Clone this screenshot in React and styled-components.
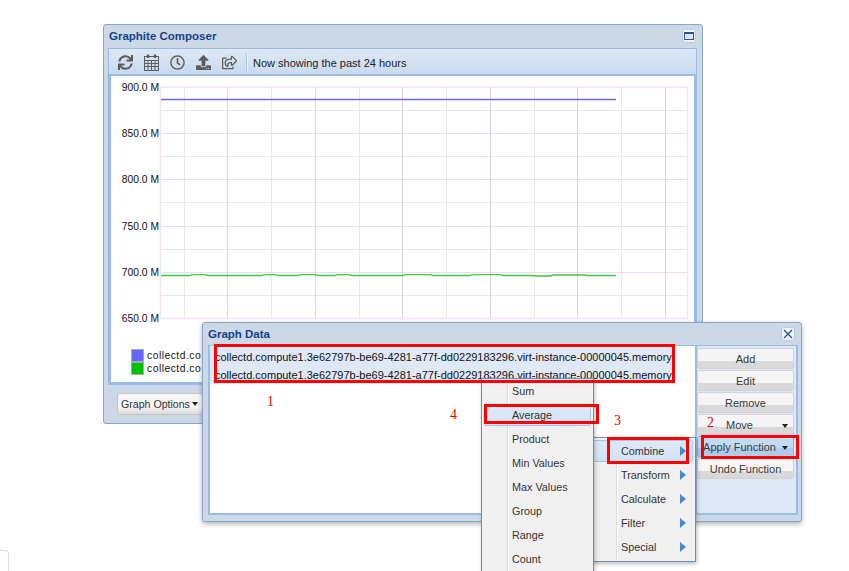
import styled, { createGlobalStyle } from "styled-components";
import { FaSync, FaRegClock, FaUpload, FaRegShareSquare } from "react-icons/fa";

const GlobalStyle = createGlobalStyle`
  html, body {
    margin: 0;
    padding: 0;
    background: #fff;
    font-family: "Liberation Sans", Arial, sans-serif;
  }
`;

const TARGET = "collectd.compute1.3e62797b-be69-4281-a77f-dd0229183296.virt-instance-00000045.memory-";
const buttons = ["Add", "Edit", "Remove", "Move", "Apply Function", "Undo Function"];
const firstMenu = ["Sum", "Average", "Product", "Min Values", "Max Values", "Group", "Range", "Count"];
const subMenu = ["Combine", "Transform", "Calculate", "Filter", "Special"];
const yLabels = [
  ["900.0 M", 87],
  ["850.0 M", 133],
  ["800.0 M", 179],
  ["750.0 M", 226],
  ["700.0 M", 272],
  ["650.0 M", 318],
];
const minorY = [110, 156, 202, 249, 295];
const majorX = [227, 315, 402, 490, 577, 665];
const minorX = [184, 271, 359, 446, 534, 621];
const greenLine =
  "161,275.5 190,275.5 193,274.6 205,274.6 208,275.5 262,275.5 265,274.6 275,274.6 278,275.5 298,275.5 301,274.6 315,274.6 318,275.5 335,275.5 " +
  "338,274.6 349,274.6 352,275.5 403,275.5 406,274.6 430,274.6 433,275.5 470,275.5 473,274.6 500,274.6 503,275.5 533,275.5 536,276 550,276 553,275 585,275 588,275.5 616,275.5";

const Desktop = styled.div`
  position: relative;
  width: 849px;
  height: 571px;
  overflow: hidden;
  background: #fff;
`;

const PageCorner = styled.div`
  position: absolute;
  left: -10px;
  top: 550px;
  width: 17px;
  height: 40px;
  border: 1px solid #ddd;
  border-radius: 4px;
`;

const Window = styled.section`
  position: absolute;
  left: ${(p) => p.$left}px;
  top: ${(p) => p.$top}px;
  width: 600px;
  height: ${(p) => p.$height}px;
  box-sizing: border-box;
  display: flex;
  flex-direction: column;
  background: #cbd8e7;
  border: 1px solid #8ba5c7;
  border-radius: 3px;
  box-shadow: ${(p) => (p.$shadow ? "0 2px 5px rgba(0, 0, 0, 0.3)" : "none")};
`;

const TitleBar = styled.header`
  height: ${(p) => p.$height}px;
  flex: none;
  box-sizing: border-box;
  display: flex;
  align-items: center;
  justify-content: space-between;
  padding: 0 6px ${(p) => p.$lift || 0}px 5px;
  color: #15428b;
  font-size: 11.5px;
  font-weight: bold;
`;

const WinButton = styled.div`
  width: 14px;
  height: 14px;
  box-sizing: border-box;
  display: flex;
  align-items: center;
  justify-content: center;
  background: #f0f5fc;
  border: 1px solid #b7cbe4;
  border-radius: 3px;
`;

const Toolbar = styled.div`
  height: 28px;
  flex: none;
  margin: 0 5px 0 4px;
  box-sizing: border-box;
  display: flex;
  align-items: center;
  padding: 1px 0 0 9px;
  border: 1px solid #99bbe8;
  border-bottom-width: 2px;
  background: linear-gradient(#dde9f6, #c9daef);
`;

const ToolIcon = styled.span`
  width: 26px;
  flex: none;
  display: flex;
  color: #5c5c5c;
  font-size: 15px;
`;

const ToolSep = styled.span`
  width: 1px;
  height: 17px;
  margin: 0 6px 0 -2px;
  background: #a9c2e0;
  box-shadow: 1px 0 0 #eef4fb;
`;

const ToolText = styled.span`
  margin-top: 1px;
  font-size: 11px;
  color: #222;
`;

const ChartPanel = styled.div`
  height: 309px;
  flex: none;
  margin: 0 5px 0 4px;
  box-sizing: border-box;
  background: #fff;
  border: 3px solid #99bbe8;
  border-top: 0;
  overflow: hidden;
`;

const Footer = styled.div`
  padding: 8px 0 0 13px;
`;

const OptionsButton = styled.div`
  width: 86px;
  height: 22px;
  box-sizing: border-box;
  display: flex;
  align-items: center;
  padding-left: 3px;
  gap: 2px;
  border: 1px solid #c4c4c4;
  border-radius: 3px;
  background: linear-gradient(#f6f6f6 60%, #dcdcdc);
  font-size: 10.6px;
  color: #333;
`;

const Caret = styled.i`
  display: block;
  width: 0;
  height: 0;
  border: 3px solid transparent;
  border-top: 4px solid #222;
  border-bottom: 0;
`;

const DataBody = styled.div`
  flex: 1;
  display: flex;
  margin: 0 3px 6px 5px;
  min-height: 0;
`;

const SeriesList = styled.div`
  flex: 1;
  min-width: 0;
  box-sizing: border-box;
  padding: 2px 21px 0 0;
  background: #fff;
  border: 2px solid #99bbe8;
  border-top-width: 1px;
  border-right: 0;
`;

const SeriesRow = styled.div`
  height: 18px;
  padding-left: 5px;
  background: #dfe8f6;
  color: #111;
  font-size: 11px;
  line-height: 19px;
  white-space: nowrap;
  overflow: hidden;
`;

const ButtonColumn = styled.div`
  width: 103px;
  flex: none;
  box-sizing: border-box;
  display: flex;
  flex-direction: column;
  gap: 1px;
  padding: 2px 2px 0 0;
  background: #dfe8f6;
  border: 2px solid #99bbe8;
  border-top-width: 1px;
`;

const ActionButton = styled.div`
  height: 21px;
  flex: none;
  box-sizing: border-box;
  display: flex;
  align-items: center;
  justify-content: center;
  position: relative;
  border: 1px solid ${(p) => (p.$active ? "#8fb3e0" : "#d2d2d2")};
  border-radius: 2px;
  background: ${(p) =>
    p.$active
      ? "linear-gradient(#c3daf3 60%, #aecbec 60%)"
      : "linear-gradient(#f5f5f5 62%, #d9d9d9 62%)"};
  color: #3a3a3a;
  font-size: 11px;
  ${(p) => (p.$caret ? "padding-right: 12px;" : "")}
`;

const ButtonCaret = styled(Caret)`
  position: absolute;
  right: 5px;
  top: 9px;
`;

const Menu = styled.div`
  position: absolute;
  left: ${(p) => p.$left}px;
  top: ${(p) => p.$top}px;
  width: ${(p) => p.$width}px;
  box-sizing: border-box;
  padding: ${(p) => p.$padding};
  background: linear-gradient(90deg, #f0f0f0 ${(p) => p.$rail}px, #dcdcdc ${(p) => p.$rail}px, #dcdcdc ${(p) => p.$rail + 1}px, #fff ${(p) => p.$rail + 1}px, #fff ${(p) => p.$rail + 2}px, #f0f0f0 ${(p) => p.$rail + 2}px);
  border: 1px solid #718bb7;
  box-shadow: 1px 2px 4px rgba(0, 0, 0, 0.25);
`;

const MenuItem = styled.div`
  height: ${(p) => (p.$active ? 22 : 24)}px;
  margin: ${(p) => (p.$active ? "1px 2px" : "0 2px")};
  box-sizing: border-box;
  display: flex;
  align-items: center;
  justify-content: space-between;
  padding: 0 ${(p) => p.$right}px 0 ${(p) => p.$indent}px;
  border-radius: 2px;
  border: 1px solid ${(p) => (p.$active ? "#a9c4ec" : "transparent")};
  background: ${(p) => (p.$active ? "linear-gradient(#dde9f8, #d2e2f6)" : "transparent")};
  color: #333;
  font-size: 10.8px;
  white-space: nowrap;
`;

const Arrow = styled.i`
  display: block;
  width: 0;
  height: 0;
  border: 5px solid transparent;
  border-left: 6px solid #4c86cf;
  border-right: 0;
`;

const RedBox = styled.div`
  position: absolute;
  left: ${(p) => p.$left}px;
  top: ${(p) => p.$top}px;
  width: ${(p) => p.$width}px;
  height: ${(p) => p.$height}px;
  box-sizing: border-box;
  border: 3px solid #f00;
`;

const Note = styled.span`
  position: absolute;
  left: ${(p) => p.$left}px;
  top: ${(p) => p.$top}px;
  color: #e00;
  font-family: "Liberation Serif", serif;
  font-size: 14px;
  line-height: 16px;
`;

function CalendarIcon() {
  return (
    <svg width="15" height="17" viewBox="0 0 15 17" fill="none" stroke="#5c5c5c" strokeWidth="1">
      <rect x="0.5" y="2.5" width="14" height="14" />
      <path d="M0.5 6.5H14.5M0.5 9.5H14.5M0.5 12.5H14.5M4 6.5V16.5M7.5 6.5V16.5M11 6.5V16.5" />
      <path d="M4 0.5V4M11 0.5V4" strokeWidth="2.4" />
    </svg>
  );
}

function Chart() {
  return (
    <svg width="584" height="309" style={{ display: "block" }}>
      <g transform="translate(-111 -76)" fontFamily="Liberation Sans, Arial, sans-serif" fontSize="10.3" fill="#111">
        {minorY.map((y) => (
          <line key={y} x1="160" x2="688" y1={y + 0.5} y2={y + 0.5} stroke="#e8e8e8" />
        ))}
        {minorX.map((x) => (
          <line key={x} x1={x + 0.5} x2={x + 0.5} y1="87" y2="319" stroke="#e8e8e8" />
        ))}
        {yLabels.slice(1, 5).map(([label, y]) => (
          <line key={label} x1="160" x2="688" y1={y + 0.5} y2={y + 0.5} stroke="#eedcee" />
        ))}
        {majorX.map((x) => (
          <line key={x} x1={x + 0.5} x2={x + 0.5} y1="87" y2="319" stroke="#e2d0e2" />
        ))}
        <rect x="160.5" y="87" width="527" height="231.5" fill="none" stroke="#f2e4f2" strokeWidth="1.5" />
        <line x1="161" x2="616" y1="99.5" y2="99.5" stroke="#6c6aec" strokeWidth="1.3" />
        <polyline points={greenLine} fill="none" stroke="#3ccc3c" strokeWidth="1.4" />
        {yLabels.map(([label, y]) => (
          <text key={label} x="159" y={y + 3.5} textAnchor="end">{label}</text>
        ))}
        <rect x="131.5" y="349.5" width="12" height="12" fill="#6666ff" stroke="#aaa" />
        <rect x="131.5" y="362.5" width="12" height="12" fill="#00c000" stroke="#aaa" />
        <text x="147" y="359" letterSpacing="0.5">collectd.co</text>
        <text x="147" y="372" letterSpacing="0.5">collectd.co</text>
      </g>
    </svg>
  );
}

export default function App() {
  return (
    <Desktop>
      <GlobalStyle />
      <PageCorner />

      <Window $left={103} $top={24} $height={400}>
        <TitleBar $height={23} $lift={2}>
          Graphite Composer
          <WinButton>
            <svg width="10" height="8" viewBox="0 0 10 8">
              <rect x="0.5" y="0.5" width="9" height="7" fill="#dfe8f6" stroke="#2a4f9e" />
              <rect x="0" y="0" width="10" height="2" fill="#2a4f9e" />
            </svg>
          </WinButton>
        </TitleBar>
        <Toolbar>
          <ToolIcon><FaSync /></ToolIcon>
          <ToolIcon><CalendarIcon /></ToolIcon>
          <ToolIcon><FaRegClock /></ToolIcon>
          <ToolIcon><FaUpload /></ToolIcon>
          <ToolIcon><FaRegShareSquare /></ToolIcon>
          <ToolSep />
          <ToolText>Now showing the past 24 hours</ToolText>
        </Toolbar>
        <ChartPanel>
          <Chart />
        </ChartPanel>
        <Footer>
          <OptionsButton>
            Graph Options
            <Caret />
          </OptionsButton>
        </Footer>
      </Window>

      <Window $left={202} $top={322} $height={200} $shadow>
        <TitleBar $height={22}>
          Graph Data
          <WinButton>
            <svg width="10" height="10" viewBox="0 0 10 10">
              <path d="M1 1L9 9M9 1L1 9" stroke="#2a4f9e" strokeWidth="1.3" />
            </svg>
          </WinButton>
        </TitleBar>
        <DataBody>
          <SeriesList>
            <SeriesRow>{TARGET}</SeriesRow>
            <SeriesRow>{TARGET}</SeriesRow>
          </SeriesList>
          <ButtonColumn>
            {buttons.map((label) => (
              <ActionButton
                key={label}
                $active={label === "Apply Function"}
                $caret={label === "Move" || label === "Apply Function"}
              >
                {label}
                {(label === "Move" || label === "Apply Function") && <ButtonCaret />}
              </ActionButton>
            ))}
          </ButtonColumn>
        </DataBody>
      </Window>

      <Menu $left={560} $top={437} $width={136} $rail={55} $padding="1px 0 2px">
        {subMenu.map((label) => (
          <MenuItem key={label} $indent={57} $right={6} $active={label === "Combine"}>
            {label}
            <Arrow />
          </MenuItem>
        ))}
      </Menu>

      <Menu $left={481} $top={378} $width={113} $rail={25} $padding="0">
        {firstMenu.map((label) => (
          <MenuItem key={label} $indent={27} $right={3} $active={label === "Average"}>
            {label}
          </MenuItem>
        ))}
      </Menu>

      <RedBox $left={214} $top={344} $width={461} $height={39} />
      <RedBox $left={484} $top={404} $width={115} $height={20} />
      <RedBox $left={607} $top={437} $width={82} $height={27} />
      <RedBox $left={701} $top={435} $width={98} $height={24} />

      <Note $left={267} $top={394}>1</Note>
      <Note $left={707} $top={415}>2</Note>
      <Note $left={614} $top={413}>3</Note>
      <Note $left={450} $top={407}>4</Note>
    </Desktop>
  );
}
